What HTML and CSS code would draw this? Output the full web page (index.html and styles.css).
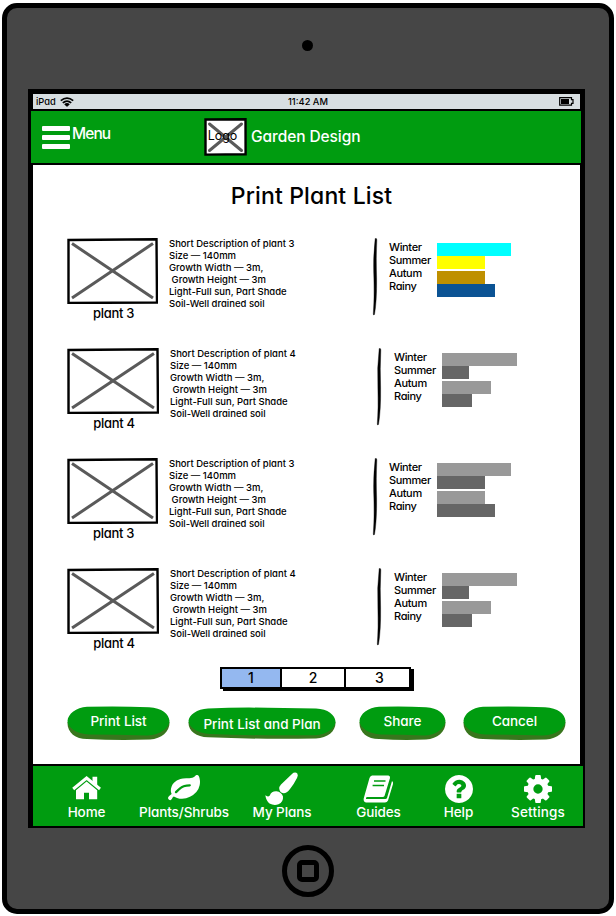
FILE: index.html
```html
<!DOCTYPE html>
<html lang="en">
<head>
<meta charset="utf-8">
<title>Garden Design</title>
<link rel="stylesheet" href="styles.css">
</head>
<body>
<div class="device">
  <div class="camera"></div>
  <main class="screen">
    <div class="status">
      <span class="carrier"><span>iPad</span>
        <svg class="wifi" viewBox="0 0 14 10"><path d="M.8 3.600Q7-1.400 13.200 3.600M2.800 5.900Q7 2.400 11.200 5.900M4.800 7.900Q7 6 9.200 7.900" fill="none" stroke="#000" stroke-width="1.800"/><path d="M5.400 8h3.200L7 10z"/></svg>
      </span>
      <span class="clock">11:42 AM</span>
      <svg class="battery" viewBox="0 0 15 9"><path d="M.7 .7H12.500V2.700H14V6.300H12.500V8.200H.7z" fill="none" stroke="#000" stroke-width="1.200"/><path d="M2 2h8v5H2z"/></svg>
    </div>
    <header class="topbar">
      <div class="menu"><span class="bars"><i></i><i></i><i></i></span><span class="menu-label">Menu</span></div>
      <div class="logo"><svg viewBox="0 0 43 38"><path d="M1.500 1.500L41.500 1.200L41.600 36.300L1.500 36.600z" fill="#fff" stroke="#000" stroke-width="2.400"/><path d="M5.500 6L37.500 32.500M37.500 6L5.500 32.500" stroke="#5a5a5a" stroke-width="3" stroke-linecap="round"/></svg><span>Logo</span></div>
      <span class="brand">Garden Design</span>
    </header>
    <section class="content">
      <h1><span>Print Plant List</span></h1>
      <div class="plants" id="plants"></div>
      <nav class="pages"><span class="current">1</span><span>2</span><span>3</span></nav>
      <div class="actions">
        <div class="btn print"><svg viewBox="0 0 103 34"><path class="shade" d="M.5 16C0 26 8 33 20 33Q50 34.500 83 33.500C95 33 103 25 102.500 16z"/><path class="face" d="M20 .8Q50-.2 82 1.200C95 2 102 8 102.500 15C102 22 94 28.800 80 29.500Q50 28.500 22 28.500C9 27.500 1 22 .5 15C1 8 9 1.500 20 .8z"/></svg><span>Print List</span></div>
        <div class="btn plan"><svg viewBox="0 0 148 34"><path class="shade" d="M.5 15C0 24 8 30 20 30.300Q70 32.500 128 31.500C140 31 148 24 147.500 15z"/><path class="face" d="M20 1.500Q50 .2 80 .8L128 1.500C140 2 147 8 147.500 14.500C147 21 140 27.500 127 28.200Q70 28.800 22 27C9 26 1 20 .5 14C1 8 9 2 20 1.500z"/></svg><span>Print List and Plan</span></div>
        <div class="btn share"><svg viewBox="0 0 87 34"><path class="shade" d="M.5 16C0 26 8 33 20 33Q43 34.500 67 33.500C79 33 87 25 86.500 16z"/><path class="face" d="M20 .8Q43-.2 67 1.200C79 2 86 8 86.500 15C86 22 78 28.800 66 29.500Q43 28.500 22 28.500C9 27.500 1 22 .5 15C1 8 9 1.500 20 .8z"/></svg><span>Share</span></div>
        <div class="btn cancel"><svg viewBox="0 0 103 34"><path class="shade" d="M.5 16C0 26 8 33 20 33Q50 34.500 83 33.500C95 33 103 25 102.500 16z"/><path class="face" d="M20 .8Q50-.2 82 1.200C95 2 102 8 102.500 15C102 22 94 28.800 80 29.500Q50 28.500 22 28.500C9 27.500 1 22 .5 15C1 8 9 1.500 20 .8z"/></svg><span>Cancel</span></div>
      </div>
    </section>
    <footer class="tabs">
      <div class="tab home"><svg width="30" height="24" viewBox="0 0 30 24"><path d="M1.200 13L14.600 2L28 13" fill="none" stroke="#fff" stroke-width="3"/><path d="M20.500 .8h4.700v9l-4.700-3.800zM14.600 5.600L25.200 14.300V23.300H17V16.700H12V23.300H4V14.300z"/></svg><span>Home</span></div>
      <div class="tab shrubs"><svg width="32" height="26" viewBox="0 128 1792 1456"><path d="M1280 704q0-26-19-45t-45-19q-172 0-318 49.500t-259.500 134-235.500 219.500q-19 21-19 45 0 26 19 45t45 19q24 0 45-19 27-24 74-71t67-66q137-124 268.500-176t313.500-52q26 0 45-19t19-45zm512-198q0 95-20 193-46 224-184.500 383t-357.500 268q-214 108-438 108-148 0-286-47-15-5-88-42t-96-37q-16 0-39.500 32t-45 70-52.500 70-60 32q-43 0-63.500-17.500t-45.500-59.500q-2-4-6-11t-5.500-10-3-9.500-1.500-13.500q0-35 31-73.500t68-65.500 68-56 31-48q0-4-14-38t-16-44q-9-51-9-104 0-115 43.500-220t119-184.500 170.500-139 204-95.500q55-18 145-25.500t179.500-9 178.500-6 163.500-24 113.500-56.500l29.500-29.500 29.500-28 27-20 36.500-16 43.500-4.500q39 0 70.500 46t47.500 112 24 124 8 96z"/></svg><span>Plants/Shrubs</span></div>
      <div class="tab plans"><svg width="34" height="34" viewBox="0 0 34 34"><path d="M28.500 .8Q31 0 32.300 1.500Q33.500 3 32 6Q29 12 25 17Q21.500 21.500 18.500 21.300Q14.500 20.500 14.200 16.500Q14.200 14.500 16 12.500L27 2Q28 1 28.500 .8zM11.500 19.300Q16.500 20 18 24.500Q18.500 30 13.500 32.300Q9 34 4.500 31.500Q1.200 29 .3 23.300Q3 25.500 4.800 23.500Q6.500 19 11.500 19.300z"/></svg><span>My Plans</span></div>
      <div class="tab guides"><svg width="31" height="28" viewBox="0 0 31 28"><path d="M9 .5H25.500Q27.500 1 27 3L21.500 21Q21 22 19.500 22H4Q2.500 22.500 3 24H22.500Q23.500 24 24 23L29 6Q30.500 7 30 9L25 25.500Q24 27.500 22 27.500H3Q.2 27 .7 23.500L6.500 3Q7 1 9 .5z"/><path d="M11 6H22.500M9.600 10.500H21" stroke="#009c10" stroke-width="1.500"/></svg><span>Guides</span></div>
      <div class="tab help"><svg width="28" height="28" viewBox="128 128 1536 1536"><path d="M1024 1376v-192q0-14-9-23t-23-9h-192q-14 0-23 9t-9 23v192q0 14 9 23t23 9h192q14 0 23-9t9-23zm256-672q0-88-55.500-163t-138.500-116-170-41q-243 0-371 213-15 24 8 42l132 100q7 6 19 6 16 0 25-12 53-68 86-92 34-24 86-24 48 0 85.500 26t37.500 59q0 38-20 61t-68 45q-63 28-115.500 86.500t-52.500 125.500v36q0 14 9 23t23 9h192q14 0 23-9t9-23q0-19 21.500-49.500t54.500-49.500q32-18 49-28.500t46-35 44.500-48 28-60.500 12.500-81zm384 192q0 209-103 385.500t-279.500 279.500-385.500 103-385.500-103-279.500-279.500-103-385.500 103-385.500 279.500-279.500 385.500-103 385.500 103 279.500 279.500 103 385.500z"/></svg><span>Help</span></div>
      <div class="tab settings"><svg width="28" height="28" viewBox="128 128 1536 1536"><path d="M1152 896q0-106-75-181t-181-75-181 75-75 181 75 181 181 75 181-75 75-181zm512-109v222q0 12-8 23t-20 13l-185 28q-19 54-39 91 35 50 107 138 10 12 10 25t-9 23q-27 37-99 108t-94 71q-12 0-26-9l-138-108q-44 23-91 38-16 136-29 186-7 28-36 28h-222q-14 0-24.500-8.500t-11.500-21.500l-28-184q-49-16-90-37l-141 107q-10 9-25 9-14 0-25-11-126-114-165-168-7-10-7-23 0-12 8-23 15-21 51-66.500t54-70.500q-27-50-41-99l-183-27q-13-2-21-12.500t-8-23.500v-222q0-12 8-23t19-13l186-28q14-46 39-92-40-57-107-138-10-12-10-24 0-10 9-23 26-36 98.500-107.500t94.500-71.500q13 0 26 10l138 107q44-23 91-38 16-136 29-186 7-28 36-28h222q14 0 24.500 8.500t11.500 21.500l28 184q49 16 90 37l142-107q9-9 24-9 13 0 25 10 129 119 165 170 7 8 7 22 0 12-8 23-15 21-51 66.500t-54 70.500q26 50 41 98l183 28q13 2 21 12.500t8 23.500z"/></svg><span>Settings</span></div>
    </footer>
  </main>
  <div class="home-button"><i></i></div>
</div>
<script src="plants.js"></script>
</body>
</html>
```
FILE: styles.css
```css
* { box-sizing: border-box; }
body { margin: 0; width: 616px; height: 916px; overflow: hidden; background: #fff; color: #000; font-family: Inter, "Liberation Sans", sans-serif; font-feature-settings: "cv11"; font-weight: 500; }
svg { display: block; }
span { white-space: pre; }
.device { width: 612px; height: 911px; margin: 3px 2px 2px; background: #464646; border: 5px solid #000; border-radius: 15px; display: flex; flex-direction: column; align-items: center; }
.camera { width: 11px; height: 11px; margin: 32px 1px 0 0; border-radius: 50%; background: #000; }
.screen { width: 557px; height: 739px; margin-top: 38px; margin-right: 3px; padding: 5px 0 2px; background: #000; display: flex; flex-direction: column; }
.status { width: 547px; height: 15px; margin-left: 5px; padding: 0 6px 0 3px; background: #d7dee1; display: grid; grid-template-columns: 252px 1fr auto; align-items: center; font-size: 9.3px; line-height: 15px; }
.carrier { display: flex; align-items: center; gap: 4px; }
.wifi { width: 14px; height: 10px; }
.battery { width: 15px; height: 9px; }
.topbar { width: 550px; height: 52px; margin: 2px 0 2px 3px; background: #009c10; color: #fff; display: flex; }
.menu { width: 173px; padding: 15px 0 0 11px; display: flex; gap: 2px; }
.bars { display: grid; gap: 4px; align-content: start; }
.bars i { width: 28px; height: 5px; border-radius: 1px; background: #fff; }
.menu-label { font-size: 15.5px; line-height: 16px; letter-spacing: -.9px; }
.logo { width: 43px; height: 38px; margin-top: 7px; display: grid; place-items: center; color: #000; font-size: 12.5px; font-weight: 400; }
.logo > * { grid-area: 1 / 1; }
.logo span { margin: -3px 6px 0 0; letter-spacing: -.1px; }
.brand { margin: 16px 0 0 4px; font-size: 15.5px; line-height: 20px; letter-spacing: -.08px; }
.content { width: 547px; height: 599px; margin-left: 5px; background: #fff; }
h1 { margin: 0; height: 73px; padding: 16px 0 0 10px; text-align: center; font-size: 23px; line-height: 30px; font-weight: 500; letter-spacing: .15px; }
.plants { height: 429px; overflow: hidden; }
.plant { height: 110px; padding-left: 34px; display: flex; }
.photo { width: 91px; }
.photo svg { width: 91px; height: 66px; }
.alt .photo svg { width: 92px; }
.name { text-align: center; font-size: 13px; line-height: 18px; margin-left: 2px; letter-spacing: -.3px; }
.plant.alt .name { margin-left: 3px; }
.desc { width: 195px; margin-left: 11px; font-size: 9.5px; line-height: 12px; letter-spacing: 0; }
.desc div { width: max-content; white-space: pre; }
.divider { width: 6px; height: 78px; margin-left: 8px; }
.seasons { width: 48px; padding-top: 3px; margin-left: 11px; font-size: 11px; line-height: 13px; letter-spacing: -.35px; }
.seasons div { width: max-content; }
.bars-chart { padding-top: 5px; }
.bar { height: 13px; }
.bar:nth-child(3) { margin-top: 2px; }
.alt .desc { margin-left: 12px; }
.alt .divider { margin-left: 11px; }
.alt .seasons { margin-left: 12px; }
.pages { width: 191px; height: 22px; margin-left: 187px; border: 2px solid #000; box-shadow: 3px 2px 0 #000; display: grid; grid-template-columns: 58px 64px 1fr; font-size: 14px; line-height: 18px; text-align: center; }
.pages span + span { border-left: 2px solid #000; }
.pages span:last-child { padding-left: 4px; }
.current { background: #94b8f0; }
.actions { margin: 17px 0 0 34px; display: flex; align-items: flex-start; }
.btn { display: grid; height: 34px; color: #fff; font-size: 13.5px; text-align: center; line-height: 30px; letter-spacing: -.05px; }
.btn > * { grid-area: 1 / 1; }
.btn svg { width: 100%; height: 34px; }
.shade { fill: #38761d; }
.face { fill: #009c10; }
.print, .cancel { width: 103px; }
.plan { width: 148px; margin: 1px 23px 0 18px; line-height: 34px; letter-spacing: 0; }
.share { width: 87px; margin-right: 17px; }
.tabs { width: 550px; height: 60px; margin: 2px 0 0 5px; background: #009c10; fill: #fff; color: #fff; display: flex; font-size: 13.5px; line-height: 18px; letter-spacing: -.1px; }
.tab { height: 60px; display: flex; flex-direction: column; align-items: center; justify-content: space-between; padding-bottom: 5px; }
.tab svg { margin-top: 9px; }
.tab span { margin-top: -20px; }
.home { width: 107px; }
.home svg { margin-top: 10px; }
.shrubs { width: 88px; }
.plans { width: 108px; }
.plans svg { margin-top: 6px; }
.guides { width: 85px; }
.help { width: 75px; }
.settings { width: 84px; letter-spacing: .15px; }
.home-button { width: 52px; height: 52px; margin-top: 17px; border: 5px solid #000; border-radius: 50%; display: grid; place-items: center; }
.home-button i { width: 22px; height: 22px; border: 5px solid #000; border-radius: 5px; }
```
FILE: plants.js
```js
const seasons = ["Winter", "Summer", "Autum", "Rainy"];
const grey = ["#999", "#666", "#999", "#666"];
const plants = [
  { n: 3, bars: [74, 48, 48, 58], colors: ["#0ff", "#ff0", "#bf9000", "#0b5394"] },
  { n: 4, bars: [75, 27, 49, 30], colors: grey },
  { n: 3, bars: [74, 48, 48, 58], colors: grey },
  { n: 4, bars: [75, 27, 49, 30], colors: grey }
];
document.getElementById("plants").innerHTML = plants.map(p => `
  <article class="plant${p.n === 4 ? " alt" : ""}">
    <div class="photo">
      <svg viewBox="0 0 91 66" preserveAspectRatio="none"><path d="M1.500 2L89.500 1.200L90 64.500L1.500 65z" fill="#fff" stroke="#000" stroke-width="2.400"/><path d="M5 5.500L86 60M86 5.500L5 60" stroke="#5a5a5a" stroke-width="3"/></svg>
      <div class="name"><span>plant ${p.n}</span></div>
    </div>
    <div class="desc">${["Short Description of plant " + p.n, "Size — 140mm", "Growth Width — 3m,", " Growth Height — 3m", "Light-Full sun, Part Shade", "Soil-Well drained soil"].map(t => `<div>${t}</div>`).join("")}</div>
    <svg class="divider" viewBox="0 0 6 78"><path d="M3.200 .5Q5 0 4.800 2Q3.900 20 4.600 40Q4.900 62 2.500 76.500Q1.200 77.500 1.300 76Q2.500 60 1.900 40Q.9 20 3.200 .5z" stroke="#000" stroke-width=".4"/></svg>
    <div class="seasons">${seasons.map(s => `<div>${s}</div>`).join("")}</div>
    <div class="bars-chart">${p.bars.map((w, i) => `<div class="bar" style="width:${w}px;background:${p.colors[i]}"></div>`).join("")}</div>
  </article>`).join("");
```
